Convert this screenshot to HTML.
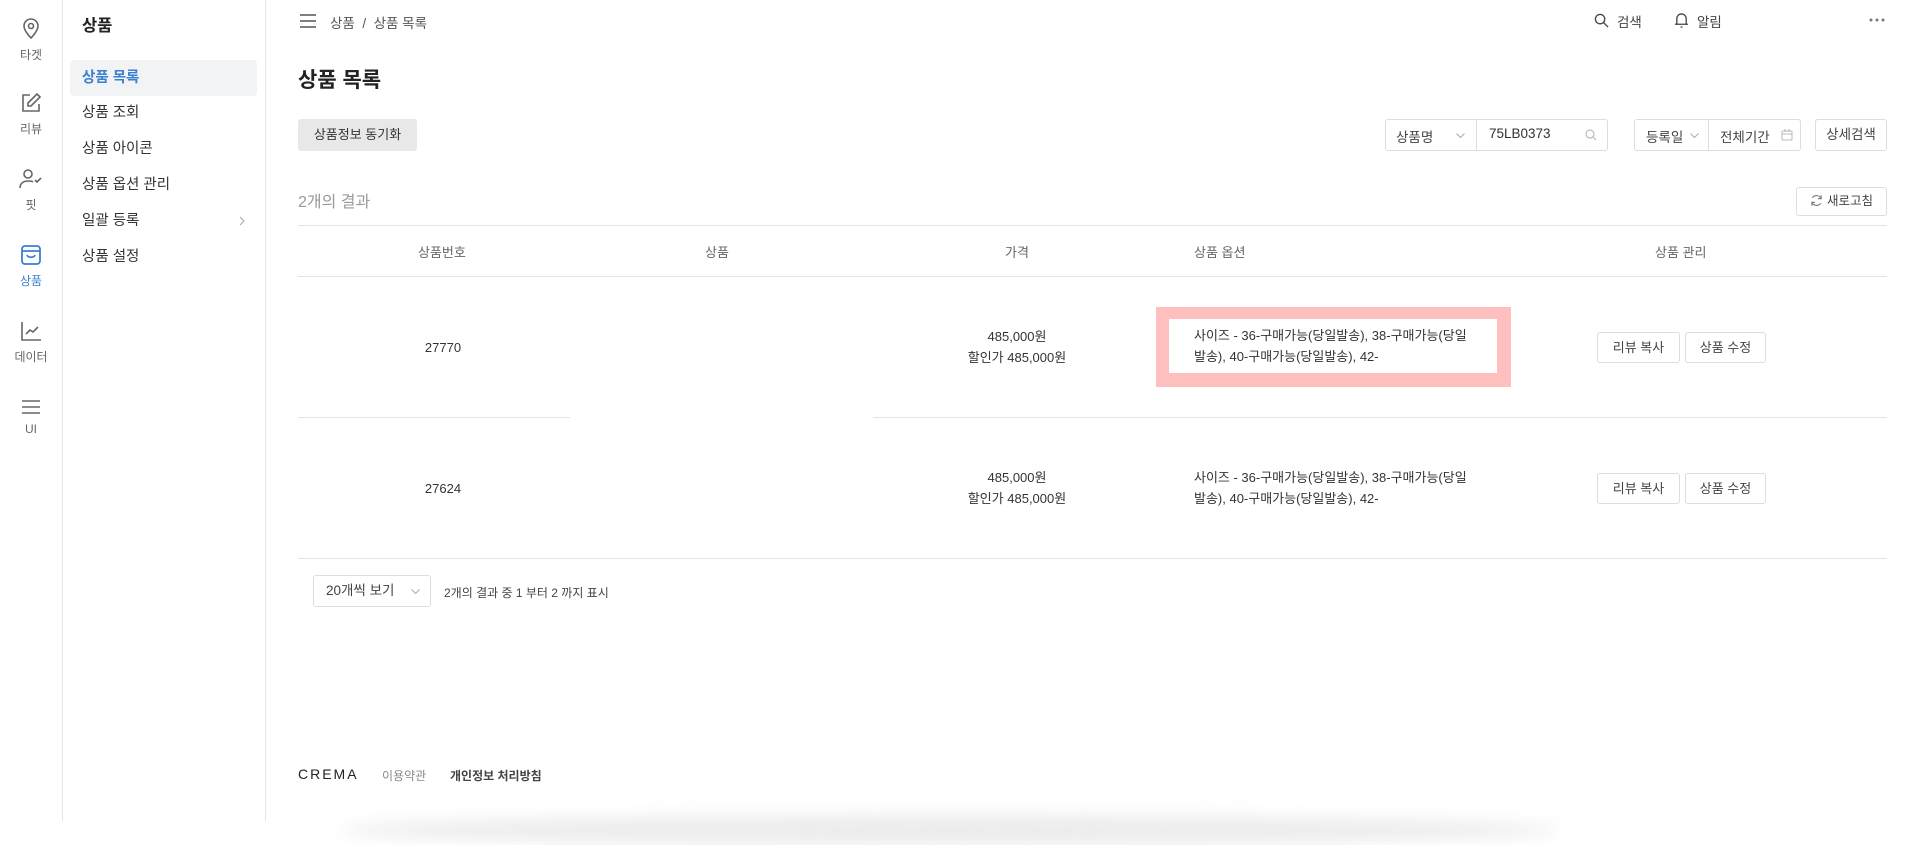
<!DOCTYPE html>
<html><head><meta charset="utf-8"><style>
*{box-sizing:border-box;margin:0;padding:0}
body{width:1911px;height:821px;overflow:hidden;background:#fff;font-family:"Liberation Sans","Noto Sans CJK KR",sans-serif;color:#333;position:relative}
.a{position:absolute}
.rail{left:0;top:0;width:63px;height:821px;border-right:1px solid #e6e6e6}
.ri{position:absolute;left:0;width:62px;text-align:center;font-size:12px;color:#666}
.ri svg{display:block;margin:0 auto 6px}
.side{left:63px;top:0;width:203px;height:821px;border-right:1px solid #e6e6e6}
.it{position:absolute;left:7px;width:187px;height:36px;line-height:36px;padding-left:12px;font-size:14.5px;color:#333;border-radius:4px}
.btn{position:absolute;border:1px solid #ddd;border-radius:3px;background:#fff;font-size:13px;color:#444;text-align:center}
.th{position:absolute;top:242px;font-size:13px;color:#666}
.td{position:absolute;font-size:13px;color:#333;text-align:center;line-height:21px}
.ln{position:absolute;height:1px;background:#e3e3e3}
</style></head><body>
<div class="a rail">
 <div class="ri" style="top:16px"><svg width="22" height="24" viewBox="0 0 22 24" fill="none" stroke="#666" stroke-width="1.6"><path d="M11 22s-7-7-7-12a7 7 0 0114 0c0 5-7 12-7 12z"/><circle cx="11" cy="10" r="2.5"/></svg>타겟</div>
 <div class="ri" style="top:92px"><svg width="22" height="22" viewBox="0 0 22 22" fill="none" stroke="#666" stroke-width="1.6"><path d="M10 3H3v16h16v-7"/><path d="M17 2l3 3-9 9H8v-3z"/></svg>리뷰</div>
 <div class="ri" style="top:168px"><svg width="26" height="22" viewBox="0 0 26 22" fill="none" stroke="#666" stroke-width="1.6"><circle cx="10" cy="6" r="4"/><path d="M2 20c0-5 4-7 8-7s5 1 5 1"/><path d="M17 12l2 2 4-4"/></svg>핏</div>
 <div class="ri" style="top:244px;color:#3b7fd0"><svg width="22" height="22" viewBox="0 0 22 22" fill="none" stroke="#3b7fd0" stroke-width="1.8"><rect x="2" y="2" width="18" height="18" rx="3"/><path d="M2 7h18M7 11c1 3 7 3 8 0"/></svg>상품</div>
 <div class="ri" style="top:320px"><svg width="22" height="22" viewBox="0 0 22 22" fill="none" stroke="#666" stroke-width="1.6"><path d="M2 2v18h19"/><path d="M6 14l4-4 3 2 5-5"/></svg>데이터</div>
 <div class="ri" style="top:398px"><svg width="22" height="18" viewBox="0 0 22 18" fill="none" stroke="#666" stroke-width="1.6"><path d="M2 3h18M2 9h18M2 15h18"/></svg>UI</div>
</div>
<div class="a side">
 <div class="a" style="left:19px;top:12px;font-size:16.5px;font-weight:bold;color:#222">상품</div>
 <div class="it" style="top:60px;background:#f2f3f5;color:#3b7fd0;font-weight:bold">상품 목록</div>
 <div class="it" style="top:95px">상품 조회</div>
 <div class="it" style="top:131px">상품 아이콘</div>
 <div class="it" style="top:167px">상품 옵션 관리</div>
 <div class="it" style="top:203px">일괄 등록<svg style="position:absolute;right:12px;top:13px" width="6" height="10" viewBox="0 0 6 10" fill="none" stroke="#aaa" stroke-width="1.1"><path d="M1 1l4 4-4 4"/></svg></div>
 <div class="it" style="top:239px">상품 설정</div>
</div>
<svg class="a" style="left:299px;top:14px" width="18" height="14" viewBox="0 0 18 14" fill="none" stroke="#555" stroke-width="1.5"><path d="M1 1h16M1 7h16M1 13h16"/></svg>
<div class="a" style="left:330px;top:12px;font-size:13.5px;color:#555">상품 &nbsp;/&nbsp; 상품 목록</div>
<svg class="a" style="left:1594px;top:13px" width="15" height="15" viewBox="0 0 16 16" fill="none" stroke="#444" stroke-width="1.4"><circle cx="6.5" cy="6.5" r="5"/><path d="M10 10l5 5"/></svg>
<div class="a" style="left:1617px;top:11px;font-size:13.5px;color:#444">검색</div>
<svg class="a" style="left:1674px;top:12px" width="15" height="17" viewBox="0 0 16 18" fill="none" stroke="#444" stroke-width="1.4"><path d="M3 13V7a5 5 0 0110 0v6h2H1z"/><path d="M7 16h2"/></svg>
<div class="a" style="left:1697px;top:11px;font-size:13.5px;color:#444">알림</div>
<svg class="a" style="left:1869px;top:18px" width="16" height="4"><circle cx="2" cy="2" r="1.5" fill="#777"/><circle cx="8" cy="2" r="1.5" fill="#777"/><circle cx="14" cy="2" r="1.5" fill="#777"/></svg>
<div class="a" style="left:298px;top:64px;font-size:21px;font-weight:bold;color:#222">상품 목록</div>
<div class="a" style="left:298px;top:119px;width:119px;height:32px;background:#e8e8e8;border-radius:3px;font-size:13px;line-height:32px;text-align:center;color:#333">상품정보 동기화</div>
<div class="btn" style="left:1385px;top:119px;width:223px;height:32px"></div>
<div class="a" style="left:1476px;top:119px;width:1px;height:32px;background:#ddd"></div>
<div class="a" style="left:1396px;top:126px;font-size:13.5px;color:#444">상품명</div>
<svg class="a" style="left:1456px;top:133px" width="9" height="5" viewBox="0 0 9 5" fill="none" stroke="#aaa"><path d="M0.5 0.5l4 4 4-4"/></svg>
<div class="a" style="left:1489px;top:126px;font-size:13.5px;color:#333">75LB0373</div>
<svg class="a" style="left:1585px;top:129px" width="12" height="12" viewBox="0 0 12 12" fill="none" stroke="#bbb" stroke-width="1.2"><circle cx="5" cy="5" r="4"/><path d="M8 8l3 3"/></svg>
<div class="btn" style="left:1634px;top:119px;width:167px;height:32px"></div>
<div class="a" style="left:1708px;top:119px;width:1px;height:32px;background:#ddd"></div>
<div class="a" style="left:1646px;top:126px;font-size:13.5px;color:#444">등록일</div>
<svg class="a" style="left:1690px;top:133px" width="9" height="5" viewBox="0 0 9 5" fill="none" stroke="#aaa"><path d="M0.5 0.5l4 4 4-4"/></svg>
<div class="a" style="left:1720px;top:126px;font-size:13.5px;color:#444">전체기간</div>
<svg class="a" style="left:1781px;top:129px" width="12" height="12" viewBox="0 0 12 12" fill="none" stroke="#bbb" stroke-width="1.1"><rect x="1" y="2" width="10" height="9" rx="1"/><path d="M1 5h10M4 0v3M8 0v3"/></svg>
<div class="btn" style="left:1815px;top:119px;width:72px;height:32px;line-height:30px;font-size:13.5px">상세검색</div>
<div class="a" style="left:298px;top:188px;font-size:16px;color:#999">2개의 결과</div>
<div class="btn" style="left:1796px;top:187px;width:91px;height:29px;line-height:27px;font-size:12.5px"><svg style="vertical-align:-2px;margin-right:4px" width="13" height="13" viewBox="0 0 14 14" fill="none" stroke="#777" stroke-width="1.2"><path d="M12 5A5.5 5.5 0 002.5 4M2 9a5.5 5.5 0 009.5 1"/><path d="M12 1.5V5H8.5M2 12.5V9h3.5"/></svg>새로고침</div>
<div class="ln" style="left:298px;top:225px;width:1589px"></div>
<div class="th" style="left:418px">상품번호</div>
<div class="th" style="left:705px">상품</div>
<div class="th" style="left:1005px">가격</div>
<div class="th" style="left:1194px">상품 옵션</div>
<div class="th" style="left:1655px">상품 관리</div>
<div class="ln" style="left:298px;top:276px;width:1589px"></div>
<div class="td" style="left:403px;top:337px;width:80px">27770</div>
<div class="td" style="left:937px;top:326px;width:160px">485,000원<br>할인가 485,000원</div>
<div class="a" style="left:1156px;top:307px;width:355px;height:80px;background:#ffbfbf"></div>
<div class="a" style="left:1169px;top:319px;width:328px;height:54px;background:#fff"></div>
<div class="td" style="left:1194px;top:325px;text-align:left;width:300px">사이즈 - 36-구매가능(당일발송), 38-구매가능(당일<br>발송), 40-구매가능(당일발송), 42-</div>
<div class="btn" style="left:1597px;top:332px;width:83px;height:31px;line-height:29px">리뷰 복사</div>
<div class="btn" style="left:1685px;top:332px;width:81px;height:31px;line-height:29px">상품 수정</div>
<div class="ln" style="left:298px;top:417px;width:272px"></div>
<div class="ln" style="left:873px;top:417px;width:1014px"></div>
<div class="td" style="left:403px;top:478px;width:80px">27624</div>
<div class="td" style="left:937px;top:467px;width:160px">485,000원<br>할인가 485,000원</div>
<div class="td" style="left:1194px;top:467px;text-align:left;width:300px">사이즈 - 36-구매가능(당일발송), 38-구매가능(당일<br>발송), 40-구매가능(당일발송), 42-</div>
<div class="btn" style="left:1597px;top:473px;width:83px;height:31px;line-height:29px">리뷰 복사</div>
<div class="btn" style="left:1685px;top:473px;width:81px;height:31px;line-height:29px">상품 수정</div>
<div class="ln" style="left:298px;top:558px;width:1589px"></div>
<div class="btn" style="left:313px;top:575px;width:118px;height:32px;line-height:30px;text-align:left;padding-left:12px;font-size:13.5px">20개씩 보기<svg style="position:absolute;right:10px;top:13px" width="9" height="5" viewBox="0 0 9 5" fill="none" stroke="#aaa"><path d="M0.5 0.5l4 4 4-4"/></svg></div>
<div class="a" style="left:444px;top:584px;font-size:12px;color:#444">2개의 결과 중 1 부터 2 까지 표시</div>
<div class="a" style="left:298px;top:766px;font-size:14px;letter-spacing:2px;color:#222">CREMA</div>
<div class="a" style="left:382px;top:767px;font-size:12px;color:#888">이용약관</div>
<div class="a" style="left:450px;top:767px;font-size:12px;color:#444;font-weight:bold">개인정보 처리방침</div>
<div class="a" style="left:340px;top:815px;width:1220px;height:30px;border-radius:50%;background:#ececec;filter:blur(8px)"></div>
</body></html>
